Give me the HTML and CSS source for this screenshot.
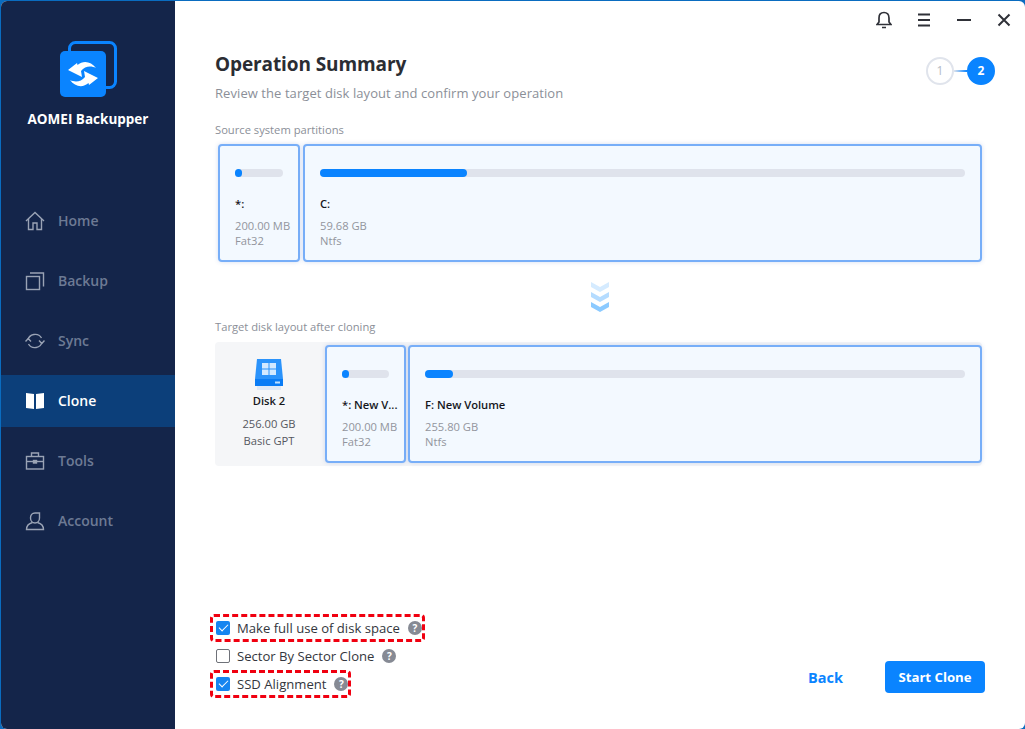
FILE: index.html
```html
<!DOCTYPE html>
<html lang="en">
<head>
    <meta charset="UTF-8">
    <meta name="viewport" content="width=device-width, initial-scale=1.0">
    <title>AOMEI Backupper</title>
    <link rel="stylesheet" href="styles.css">
</head>
<body>
    <div class="window">
        <div class="sidebar">
            <div class="logo">
                <svg width="58" height="58" viewBox="0 0 58 58">
                    <rect x="9.5" y="2.5" width="46" height="45" rx="6" fill="none" stroke="#0a84ff" stroke-width="3"/>
                    <rect x="0" y="11" width="46" height="46" rx="5" fill="#0a84ff"/>
                    <path d="M8 30 L17 23 L17.5 25 C23 20 31 21 36 28 C31 25.5 25 26 21 31 L22 37 Z" fill="#fff"/>
                    <path d="M8 30 L17 23 L17.5 25 C23 20 31 21 36 28 C31 25.5 25 26 21 31 L22 37 Z" transform="rotate(180 23 34)" fill="#fff"/>
                </svg>
                <div class="logo-name">AOMEI Backupper</div>
            </div>
            <div class="nav">
                <div class="nav-item">
                    <svg width="20" height="20" viewBox="0 0 20 20" fill="none" stroke="#9aa3b5" stroke-width="1.4">
                        <path d="M1 10 L10 1.5 L19 10"/>
                        <path d="M3.5 8 V18.5 H8 V12 H12 V18.5 H16.5 V8"/>
                    </svg>
                    <span>Home</span>
                </div>
                <div class="nav-item">
                    <svg width="20" height="20" viewBox="0 0 20 20" fill="none" stroke="#9aa3b5" stroke-width="1.4">
                        <rect x="1.5" y="5.5" width="13" height="13"/>
                        <path d="M5 2 H18.5 V15.5"/>
                    </svg>
                    <span>Backup</span>
                </div>
                <div class="nav-item">
                    <svg width="20" height="20" viewBox="0 0 20 20" fill="none" stroke="#9aa3b5" stroke-width="1.4">
                        <path d="M3 9 C4 3 13 1 16.5 7"/>
                        <path d="M17 11 C16 17 7 19 3.5 13"/>
                        <path d="M0.5 10.5 L3.2 7.5 L6 10.5"/>
                        <path d="M14 9.5 L16.8 12.5 L19.5 9.5"/>
                    </svg>
                    <span>Sync</span>
                </div>
                <div class="nav-item active">
                    <svg width="20" height="20" viewBox="0 0 20 20" fill="#fff">
                        <path d="M1 2 L9 3 V18 L1 17 Z"/>
                        <path d="M19 2 L11 3 V18 L19 17 Z"/>
                    </svg>
                    <span>Clone</span>
                </div>
                <div class="nav-item">
                    <svg width="20" height="20" viewBox="0 0 20 20" fill="none" stroke="#9aa3b5" stroke-width="1.4">
                        <rect x="1.5" y="5.5" width="17" height="12.5"/>
                        <path d="M6.5 5.5 V2 H13.5 V5.5"/>
                        <path d="M1.5 10.5 H18.5"/>
                        <rect x="8.5" y="9.5" width="3" height="2.5" fill="#9aa3b5"/>
                    </svg>
                    <span>Tools</span>
                </div>
                <div class="nav-item">
                    <svg width="20" height="20" viewBox="0 0 20 20" fill="none" stroke="#9aa3b5" stroke-width="1.4">
                        <path d="M14.5 2 H10 C7 2 5.5 4 5.5 7 C5.5 10 7.5 12 10 12 C12.5 12 14.5 10 14.5 7 Z"/>
                        <path d="M7.5 11.5 C4 12.5 1.5 14 1.5 18.5 H18.5 C18.5 14 16 12.5 12.5 11.5"/>
                    </svg>
                    <span>Account</span>
                </div>
            </div>
        </div>

        <div class="main">
            <div class="topbar">
                <svg width="16" height="18" viewBox="0 0 16 18" fill="none" stroke="#2f3138" stroke-width="1.7">
                    <path d="M1 13.5 H15 L13 11 V7 C13 3.5 11 1.5 8 1.5 C5 1.5 3 3.5 3 7 V11 Z"/>
                    <path d="M6 16.5 H10"/>
                </svg>
                <svg width="16" height="18" viewBox="0 0 16 18" fill="none" stroke="#2f3138" stroke-width="1.8">
                    <path d="M2 3.5 H14 M2 9 H14 M2 14.5 H14"/>
                </svg>
                <svg width="16" height="18" viewBox="0 0 16 18" fill="none" stroke="#2f3138" stroke-width="1.8">
                    <path d="M1 9 H15"/>
                </svg>
                <svg width="16" height="18" viewBox="0 0 16 18" fill="none" stroke="#2f3138" stroke-width="2">
                    <path d="M2.5 3.5 L13.5 14.5 M13.5 3.5 L2.5 14.5"/>
                </svg>
            </div>

            <div class="heading">
                <div>
                    <h1>Operation Summary</h1>
                    <div class="subtitle">Review the target disk layout and confirm your operation</div>
                </div>
                <div class="steps">
                    <div class="step">1</div>
                    <div class="step-line"></div>
                    <div class="step current">2</div>
                </div>
            </div>

            <div class="section-label first">Source system partitions</div>
            <div class="partitions source">
                <div class="card small">
                    <div class="bar"><div class="fill" style="width: 7px"></div></div>
                    <div class="part-name">*:</div>
                    <div class="part-info">200.00 MB<br>Fat32</div>
                </div>
                <div class="card large">
                    <div class="bar"><div class="fill" style="width: 147px"></div></div>
                    <div class="part-name">C:</div>
                    <div class="part-info">59.68 GB<br>Ntfs</div>
                </div>
            </div>

            <div class="arrows">
                <svg width="20" height="30" viewBox="0 0 20 30">
                    <path d="M1 0 L10 5 L19 0 V5 L10 10 L1 5 Z" fill="#d5ebff"/>
                    <path d="M1 10 L10 15 L19 10 V15 L10 20 L1 15 Z" fill="#b5dcff"/>
                    <path d="M1 20 L10 25 L19 20 V25 L10 30 L1 25 Z" fill="#8ccaff"/>
                </svg>
            </div>

            <div class="section-label">Target disk layout after cloning</div>
            <div class="partitions target">
                <div class="disk">
                    <svg width="28" height="32" viewBox="0 0 28 32">
                        <path d="M2 0 H26 L28 20 H0 Z" fill="#2b93fb"/>
                        <rect x="0" y="20" width="28" height="7" fill="#0a7cf5"/>
                        <rect x="20" y="22.5" width="5" height="2" fill="#bfe0ff"/>
                        <rect x="7" y="4" width="6.5" height="5.5" fill="#d3e9ff"/>
                        <rect x="14.5" y="4" width="6.5" height="5.5" fill="#d3e9ff"/>
                        <rect x="7" y="10.5" width="6.5" height="5.5" fill="#d3e9ff"/>
                        <rect x="14.5" y="10.5" width="6.5" height="5.5" fill="#d3e9ff"/>
                        <rect x="2" y="27" width="24" height="4" fill="#dfe9f7"/>
                    </svg>
                    <div class="disk-name">Disk 2</div>
                    <div class="disk-info">256.00 GB<br>Basic GPT</div>
                </div>
                <div class="card small">
                    <div class="bar"><div class="fill" style="width: 7px"></div></div>
                    <div class="part-name">*: New V...</div>
                    <div class="part-info">200.00 MB<br>Fat32</div>
                </div>
                <div class="card large">
                    <div class="bar"><div class="fill" style="width: 28px"></div></div>
                    <div class="part-name">F: New Volume</div>
                    <div class="part-info">255.80 GB<br>Ntfs</div>
                </div>
            </div>

            <div class="footer">
                <div class="options">
                    <div class="option marked">
                        <span class="check on"></span>
                        <span>Make full use of disk space</span>
                        <span class="help">?</span>
                    </div>
                    <div class="option">
                        <span class="check"></span>
                        <span>Sector By Sector Clone</span>
                        <span class="help">?</span>
                    </div>
                    <div class="option marked">
                        <span class="check on"></span>
                        <span>SSD Alignment</span>
                        <span class="help">?</span>
                    </div>
                </div>
                <div class="actions">
                    <button class="back">Back</button>
                    <button class="start">Start Clone</button>
                </div>
            </div>
        </div>
    </div>
</body>
</html>
```

FILE: styles.css
```css
* {
    box-sizing: border-box;
}
body {
    margin: 0;
    height: 729px;
    overflow: hidden;
    background: #0a6cc0;
    font-family: "Open Sans", "Noto Sans", sans-serif;
    padding: 1px 0 0 1px;
}
.window {
    display: flex;
    height: 728px;
    background: white;
    border-radius: 6px;
    overflow: hidden;
}
.sidebar {
    width: 174px;
    flex-shrink: 0;
    background: #14254a;
}
.logo {
    display: flex;
    flex-direction: column;
    align-items: center;
    padding-top: 39px;
    height: 194px;
}
.logo svg {
    margin-left: 2px;
}
.logo-name {
    margin-top: 12px;
    color: white;
    font-size: 13.5px;
    font-weight: 700;
}
.nav {
    display: flex;
    flex-direction: column;
    gap: 8px;
}
.nav-item {
    display: flex;
    align-items: center;
    gap: 13px;
    height: 52px;
    padding-left: 24px;
    color: #6d7a94;
    font-size: 14px;
    font-weight: 600;
}
.nav-item span {
    padding-bottom: 2px;
}
.nav-item.active {
    background: #0c3f7a;
    color: white;
}
.main {
    flex: 1;
    display: flex;
    flex-direction: column;
    padding: 0 40px 31px 40px;
}
.topbar {
    display: flex;
    justify-content: flex-end;
    align-items: center;
    gap: 24px;
    height: 38px;
    margin-right: -27px;
}
.heading {
    display: flex;
    justify-content: space-between;
    align-items: flex-start;
    padding-top: 11px;
}
h1 {
    margin: 0;
    font-size: 19px;
    letter-spacing: -0.1px;
    line-height: 28px;
    font-weight: 700;
    color: #2b2d33;
}
.subtitle {
    margin-top: 6px;
    font-size: 13px;
    letter-spacing: 0.07px;
    line-height: 18px;
    color: #8b8f98;
}
.steps {
    display: flex;
    align-items: center;
    margin-top: 7px;
    margin-right: -10px;
}
.step {
    width: 28px;
    height: 28px;
    border: 2px solid #e0e4ec;
    border-radius: 50%;
    text-align: center;
    font-size: 12px;
    line-height: 24px;
    color: #b5bac4;
}
.step.current {
    background: #0a84ff;
    border-color: #0a84ff;
    color: white;
    font-weight: 700;
}
.step-line {
    width: 13px;
    height: 2px;
    background: linear-gradient(to right, #e0e4ec, #0a84ff);
}
.section-label {
    font-size: 11.2px;
    line-height: 16px;
    color: #8b8f98;
}
.section-label.first {
    margin-top: 20px;
}
.partitions {
    display: flex;
    gap: 3px;
}
.source {
    margin-top: 6px;
    padding: 0 3px;
    height: 118px;
}
.target {
    gap: 2px;
    margin-top: 7px;
    margin-right: 3px;
    height: 124px;
    padding: 3px 0;
    background: #f5f6f8;
    border-radius: 4px;
}
.card {
    background: #f3f9ff;
    border: 2px solid #77aef8;
    border-radius: 4px;
    box-shadow: 0 0 4px rgba(80, 120, 200, 0.25);
    padding: 23px 15px 0;
}
.card.small {
    width: 82px;
    flex-shrink: 0;
}
.target .card.small {
    width: 81px;
}
.card.large {
    flex: 1;
}
.bar {
    height: 8px;
    border-radius: 4px;
    background: #dfe3ec;
}
.fill {
    height: 8px;
    border-radius: 4px;
    background: #0a84ff;
}
.part-name {
    margin-top: 19px;
    font-size: 11.2px;
    line-height: 16px;
    font-weight: 600;
    color: #15171c;
    white-space: nowrap;
}
.part-info {
    margin-top: 7px;
    font-size: 11.2px;
    line-height: 14.5px;
    color: #92959d;
    white-space: nowrap;
}
.arrows {
    display: flex;
    justify-content: center;
    padding: 20px 0 7px;
    margin-left: -1px;
}
.arrows svg {
    display: block;
}
.disk {
    width: 108px;
    flex-shrink: 0;
    text-align: center;
    padding-top: 14px;
}
.disk svg {
    display: block;
    margin: 0 auto;
}
.disk-name {
    margin-top: 2px;
    font-size: 11.2px;
    line-height: 16px;
    font-weight: 600;
    color: #15171c;
}
.disk-info {
    margin-top: 6px;
    font-size: 11.2px;
    line-height: 17px;
    color: #55585f;
}
.footer {
    margin-top: auto;
    display: flex;
    justify-content: space-between;
    align-items: flex-end;
}
.options {
    display: flex;
    flex-direction: column;
    align-items: flex-start;
    margin-left: -5px;
}
.option {
    display: flex;
    align-items: center;
    gap: 7px;
    height: 28px;
    padding: 0 0 0 3px;
    border: 3px solid transparent;
    font-size: 13.1px;
    color: #33363d;
}
.option.marked {
    border: 3px dashed #f00010;
    border-radius: 4px;
}
.check {
    width: 14px;
    height: 14px;
    border: 1.5px solid #6e7178;
    border-radius: 2px;
}
.check.on {
    border: none;
    background: #1685f0;
    position: relative;
}
.check.on::after {
    content: "";
    position: absolute;
    left: 3px;
    top: 3px;
    width: 8px;
    height: 4px;
    border-left: 1.5px solid white;
    border-bottom: 1.5px solid white;
    transform: rotate(-45deg);
}
.help {
    width: 14px;
    height: 14px;
    margin-left: 1px;
    border-radius: 50%;
    background: #868a94;
    color: white;
    font-size: 10px;
    font-weight: 700;
    line-height: 14px;
    text-align: center;
}
.actions {
    display: flex;
    align-items: center;
    gap: 42px;
    margin-bottom: 5px;
}
button {
    border: none;
    font-family: inherit;
    font-size: 13.2px;
    font-weight: 700;
    padding: 0;
}
.back {
    background: none;
    color: #0a84ff;
    font-size: 14.5px;
}
.start {
    width: 100px;
    height: 32px;
    background: #0a84ff;
    color: white;
    border-radius: 4px;
}
```
